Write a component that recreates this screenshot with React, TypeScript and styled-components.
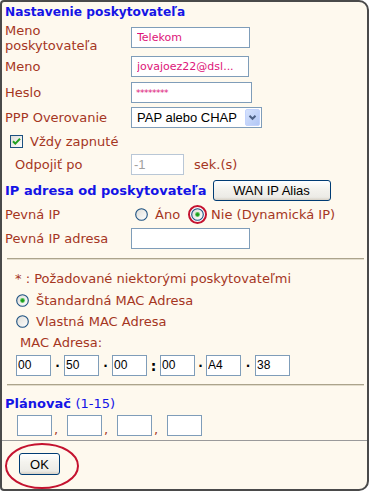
import React from "react";
import styled, { createGlobalStyle } from "styled-components";

const GlobalStyle = createGlobalStyle`
  html, body {
    margin: 0;
    padding: 0;
    background: #ffffff;
  }
  * {
    box-sizing: border-box;
  }
`;

const LABEL = "#a5361f";
const BLUE = "#1414e6";
const HIGHLIGHT = "#c4122f";

function Checkbox({ checked }: { checked: boolean }) {
  return (
    <svg width="13" height="13" viewBox="0 0 13 13">
      <defs>
        <linearGradient id="cbg" x1="0" y1="0" x2="1" y2="1">
          <stop offset="0" stopColor="#dcdcd7" />
          <stop offset="1" stopColor="#ffffff" />
        </linearGradient>
      </defs>
      <rect x="0.5" y="0.5" width="12" height="12" fill="url(#cbg)" stroke="#1c5180" />
      {checked && (
        <path d="M3 6.2 L5.3 8.6 L10 3.8" fill="none" stroke="#21a121" strokeWidth="2" />
      )}
    </svg>
  );
}

function Radio({ checked }: { checked: boolean }) {
  return (
    <svg width="13" height="13" viewBox="0 0 13 13">
      <defs>
        <linearGradient id="rbg" x1="0" y1="0" x2="1" y2="1">
          <stop offset="0" stopColor="#dcdcd7" />
          <stop offset="1" stopColor="#ffffff" />
        </linearGradient>
      </defs>
      <circle cx="6.5" cy="6.5" r="5.8" fill="url(#rbg)" stroke="#1c5180" strokeWidth="1.1" />
      {checked && (
        <>
          <circle cx="6.5" cy="6.5" r="2.4" fill="#55c455" />
          <circle cx="6.5" cy="6.5" r="1.5" fill="#1a9a1a" />
        </>
      )}
    </svg>
  );
}

function SelectArrow() {
  return (
    <svg width="15" height="17" viewBox="0 0 15 17">
      <defs>
        <linearGradient id="abg" x1="0" y1="0" x2="1" y2="1">
          <stop offset="0" stopColor="#d7e3fd" />
          <stop offset="1" stopColor="#b0c6f5" />
        </linearGradient>
      </defs>
      <rect x="0.5" y="0.5" width="14" height="16" rx="1.5" fill="url(#abg)" stroke="#c3d3fd" />
      <path d="M4.5 6.8 L7.5 9.8 L10.5 6.8" fill="none" stroke="#4d6185" strokeWidth="2" />
    </svg>
  );
}

export default function App() {
  return (
    <>
      <GlobalStyle />
      <Frame>
        <SectionTitle $h={20}>Nastavenie poskytovateľa</SectionTitle>

        <Row $h={31}>
          <Label>
            Meno
            <br />
            poskytovateľa
          </Label>
          <TextBox $w={119} $pink defaultValue="Telekom" readOnly />
        </Row>
        <Row $h={27}>
          <Label>Meno</Label>
          <TextBox $w={118} $pink defaultValue="jovajoez22@dsl..." readOnly />
        </Row>
        <Row $h={25}>
          <Label>Heslo</Label>
          <PasswordBox $w={121}>********</PasswordBox>
        </Row>
        <Row $h={25}>
          <Label>PPP Overovanie</Label>
          <Select>
            <span>PAP alebo CHAP</span>
            <SelectArrow />
          </Select>
        </Row>

        <Row $h={22} $indent={5}>
          <CheckLabel>
            <Checkbox checked />
            Vždy zapnuté
          </CheckLabel>
        </Row>
        <Row $h={25}>
          <Label $indent={10}>Odpojiť po</Label>
          <TextBox $w={53} $disabled defaultValue="-1" readOnly />
          <Unit>sek.(s)</Unit>
        </Row>

        <Row $h={26}>
          <BlueHeading>IP adresa od poskytovateľa</BlueHeading>
          <XpButton $w={118} $ml={6}>WAN IP Alias</XpButton>
        </Row>
        <Row $h={23}>
          <Label>Pevná IP</Label>
          <RadioGroup>
            <RadioOption>
              <Radio checked={false} />
              Áno
            </RadioOption>
            <RadioOption>
              <Ringed>
                <Radio checked />
              </Ringed>
              Nie (Dynamická IP)
            </RadioOption>
          </RadioGroup>
        </Row>
        <Row $h={25}>
          <Label>Pevná IP adresa</Label>
          <TextBox $w={119} readOnly />
        </Row>

        <Rule />

        <Row $h={22} $indent={10}>
          <Note>* : Požadované niektorými poskytovateľmi</Note>
        </Row>
        <Row $h={22} $indent={11}>
          <RadioOption>
            <Radio checked />
            Štandardná MAC Adresa
          </RadioOption>
        </Row>
        <Row $h={21} $indent={11}>
          <RadioOption>
            <Radio checked={false} />
            Vlastná MAC Adresa
          </RadioOption>
        </Row>
        <Row $h={21} $indent={15}>
          <Note>MAC Adresa:</Note>
        </Row>
        <Row $h={24} $indent={11}>
          <MacBox defaultValue="00" readOnly />
          <MacSep $w={13}>.</MacSep>
          <MacBox defaultValue="50" readOnly />
          <MacSep $w={13}>.</MacSep>
          <MacBox defaultValue="00" readOnly />
          <MacSep $w={13} $colon>:</MacSep>
          <MacBox defaultValue="00" readOnly />
          <MacSep $w={11}>.</MacSep>
          <MacBox defaultValue="A4" readOnly />
          <MacSep $w={14}>.</MacSep>
          <MacBox defaultValue="38" readOnly />
        </Row>

        <Rule />

        <Row $h={21}>
          <BlueHeading>
            Plánovač <Light>(1-15)</Light>
          </BlueHeading>
        </Row>
        <Row $h={23} $indent={12}>
          <MacBox readOnly />
          <Comma>,</Comma>
          <MacBox readOnly />
          <Comma>,</Comma>
          <MacBox readOnly />
          <Comma>,</Comma>
          <MacBox readOnly />
        </Row>

        <Footer>
          <OkWrap>
            <XpButton $w={41} $h={22}>
              OK
            </XpButton>
            <OkRing width="76" height="48" viewBox="0 0 76 48">
              <ellipse cx="38" cy="24" rx="36" ry="22" fill="none" stroke={HIGHLIGHT} strokeWidth="2" />
            </OkRing>
          </OkWrap>
        </Footer>
      </Frame>
    </>
  );
}

const Frame = styled.div`
  width: 369px;
  height: 491px;
  border: 2px solid #4a4a4a;
  border-radius: 4px 10px 10px 4px;
  background: #fef9ee;
  display: flex;
  flex-direction: column;
  padding-left: 3px;
  font-family: "DejaVu Sans", Verdana, sans-serif;
  font-size: 13px;
  overflow: hidden;
`;

const Row = styled.div<{ $h: number; $indent?: number }>`
  display: flex;
  align-items: center;
  height: ${(p) => p.$h}px;
  flex-shrink: 0;
  padding-left: ${(p) => p.$indent ?? 0}px;
  color: ${LABEL};
`;

const SectionTitle = styled.div<{ $h: number }>`
  height: ${(p) => p.$h}px;
  display: flex;
  align-items: center;
  flex-shrink: 0;
  color: ${BLUE};
  font-weight: bold;
  font-size: 12.2px;
`;

const BlueHeading = styled.div`
  color: ${BLUE};
  font-weight: bold;
  font-size: 13px;
`;

const Light = styled.span`
  font-weight: normal;
`;

const Label = styled.div<{ $indent?: number }>`
  width: 126px;
  flex-shrink: 0;
  padding-left: ${(p) => p.$indent ?? 0}px;
  color: ${LABEL};
  line-height: 15px;
`;

const TextBox = styled.input<{ $w: number; $pink?: boolean; $disabled?: boolean }>`
  width: ${(p) => p.$w}px;
  height: 21px;
  border: 1px solid ${(p) => (p.$disabled ? "#b9c7d6" : "#7f9db9")};
  background: #ffffff;
  padding: 0 ${(p) => (p.$pink ? 5 : 2)}px;
  margin: 0;
  outline: none;
  font-family: ${(p) => (p.$pink ? `"DejaVu Sans", Verdana, sans-serif` : `"Liberation Sans", Arial, sans-serif`)};
  font-size: ${(p) => (p.$pink ? 11 : 13)}px;
  color: ${(p) => (p.$pink ? "#dd1479" : p.$disabled ? "#a0a0a0" : "#000")};
`;

const PasswordBox = styled.div<{ $w: number }>`
  width: ${(p) => p.$w}px;
  height: 21px;
  border: 1px solid #7f9db9;
  background: #ffffff;
  padding: 0 4px;
  display: flex;
  align-items: center;
  color: #dd1479;
  font-size: 9px;
  letter-spacing: -0.5px;
`;

const Select = styled.div`
  width: 131px;
  height: 21px;
  border: 1px solid #7f9db9;
  background: #ffffff;
  display: flex;
  align-items: center;
  justify-content: space-between;
  padding: 0 1px 0 5px;
  font-family: "Liberation Sans", Arial, sans-serif;
  font-size: 13px;
  color: #000;
`;

const CheckLabel = styled.label`
  display: flex;
  align-items: center;
  gap: 7px;
  color: ${LABEL};
`;

const Unit = styled.span`
  margin-left: 10px;
  color: ${LABEL};
`;

const XpButton = styled.div<{ $w: number; $h?: number; $ml?: number }>`
  width: ${(p) => p.$w}px;
  height: ${(p) => p.$h ?? 21}px;
  margin-left: ${(p) => p.$ml ?? 0}px;
  border: 1px solid #003c74;
  border-radius: 3px;
  background: linear-gradient(#ffffff 0%, #f4f3ee 40%, #ecebe6 85%, #d6d0c5 100%);
  display: flex;
  align-items: center;
  justify-content: center;
  font-family: "Liberation Sans", Arial, sans-serif;
  font-size: 13px;
  color: #000;
`;

const RadioGroup = styled.div`
  display: flex;
  align-items: center;
  gap: 11px;
  margin-left: 4px;
`;

const RadioOption = styled.label`
  display: flex;
  align-items: center;
  gap: 7px;
  color: ${LABEL};
`;

const Ringed = styled.span`
  position: relative;
  display: inline-flex;
  &::before {
    content: "";
    position: absolute;
    left: -3px;
    top: -3px;
    width: 19px;
    height: 19px;
    border-radius: 50%;
    border: 2px solid ${HIGHLIGHT};
    box-sizing: border-box;
    background: #ffffff;
  }
  & > svg {
    position: relative;
  }
`;

const Rule = styled.div`
  height: 16px;
  flex-shrink: 0;
  display: flex;
  align-items: center;
  padding: 0 3px 0 2px;
  &::after {
    content: "";
    flex: 1;
    border-top: 1px solid #aca48c;
    border-bottom: 1px solid #e2dccb;
  }
`;

const Note = styled.div`
  color: ${LABEL};
`;

const MacBox = styled.input`
  width: 35px;
  height: 21px;
  border: 1px solid #7f9db9;
  background: #ffffff;
  padding: 0 1px;
  margin: 0;
  outline: none;
  font-family: "Liberation Sans", Arial, sans-serif;
  font-size: 12px;
  color: #000;
`;

const MacSep = styled.span<{ $w: number; $colon?: boolean }>`
  width: ${(p) => p.$w}px;
  text-align: center;
  color: #000;
  font-weight: bold;
  font-size: ${(p) => (p.$colon ? 14 : 12)}px;
  position: relative;
  top: ${(p) => (p.$colon ? 1 : -2)}px;
`;

const Comma = styled.span`
  width: 15px;
  color: ${LABEL};
  align-self: flex-end;
  padding-left: 2px;
  line-height: 14px;
`;

const Footer = styled.div`
  margin-top: 3px;
  margin-left: -3px;
  border-top: 1px solid #9a9a9a;
  flex: 1;
  padding: 12px 0 0 17px;
`;

const OkWrap = styled.div`
  position: relative;
  width: 41px;
  height: 22px;
`;

const OkRing = styled.svg`
  position: absolute;
  left: -15px;
  top: -11px;
  pointer-events: none;
`;
